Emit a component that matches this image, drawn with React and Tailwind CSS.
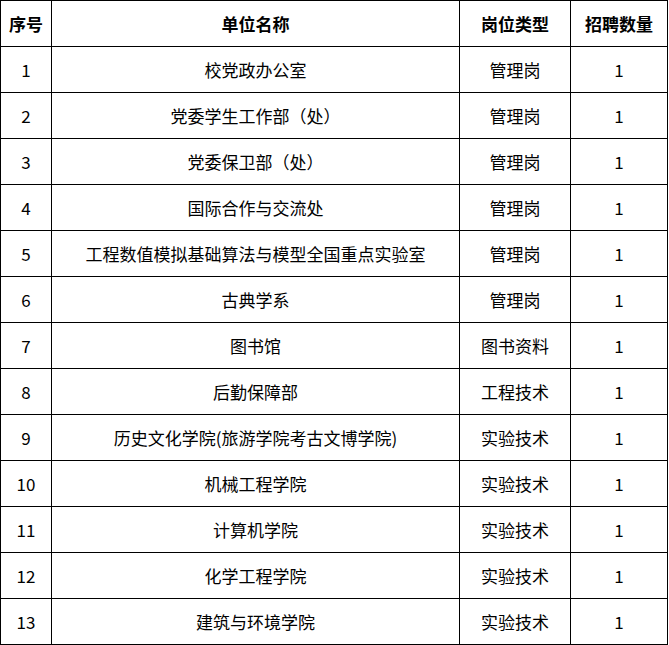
import React from 'react';

const ROWS = [
  ['1', '校党政办公室', '管理岗', '1'],
  ['2', '党委学生工作部（处）', '管理岗', '1'],
  ['3', '党委保卫部（处）', '管理岗', '1'],
  ['4', '国际合作与交流处', '管理岗', '1'],
  ['5', '工程数值模拟基础算法与模型全国重点实验室', '管理岗', '1'],
  ['6', '古典学系', '管理岗', '1'],
  ['7', '图书馆', '图书资料', '1'],
  ['8', '后勤保障部', '工程技术', '1'],
  ['9', '历史文化学院(旅游学院考古文博学院)', '实验技术', '1'],
  ['10', '机械工程学院', '实验技术', '1'],
  ['11', '计算机学院', '实验技术', '1'],
  ['12', '化学工程学院', '实验技术', '1'],
  ['13', '建筑与环境学院', '实验技术', '1'],
];

const cell = 'border border-black text-center align-middle p-0';

export default function App() {
  return (
    <div className="bg-white w-[669px] h-[645px] font-['Noto_Sans_CJK_SC',sans-serif] text-black">
      <table className="table-fixed border-collapse w-[667px] text-[17px] leading-none">
        <colgroup>
          <col className="w-[51px]" />
          <col className="w-[408px]" />
          <col className="w-[111px]" />
          <col className="w-[97px]" />
        </colgroup>
        <thead>
          <tr className="h-[46px] font-bold">
            <th className={cell}>序号</th>
            <th className={cell}>单位名称</th>
            <th className={cell}>岗位类型</th>
            <th className={cell}>招聘数量</th>
          </tr>
        </thead>
        <tbody>
          {ROWS.map(([no, unit, type, count]) => (
            <tr key={no} className="h-[46px]">
              <td className={cell}>{no}</td>
              <td className={cell}>{unit}</td>
              <td className={cell}>{type}</td>
              <td className={cell}>{count}</td>
            </tr>
          ))}
        </tbody>
      </table>
    </div>
  );
}
